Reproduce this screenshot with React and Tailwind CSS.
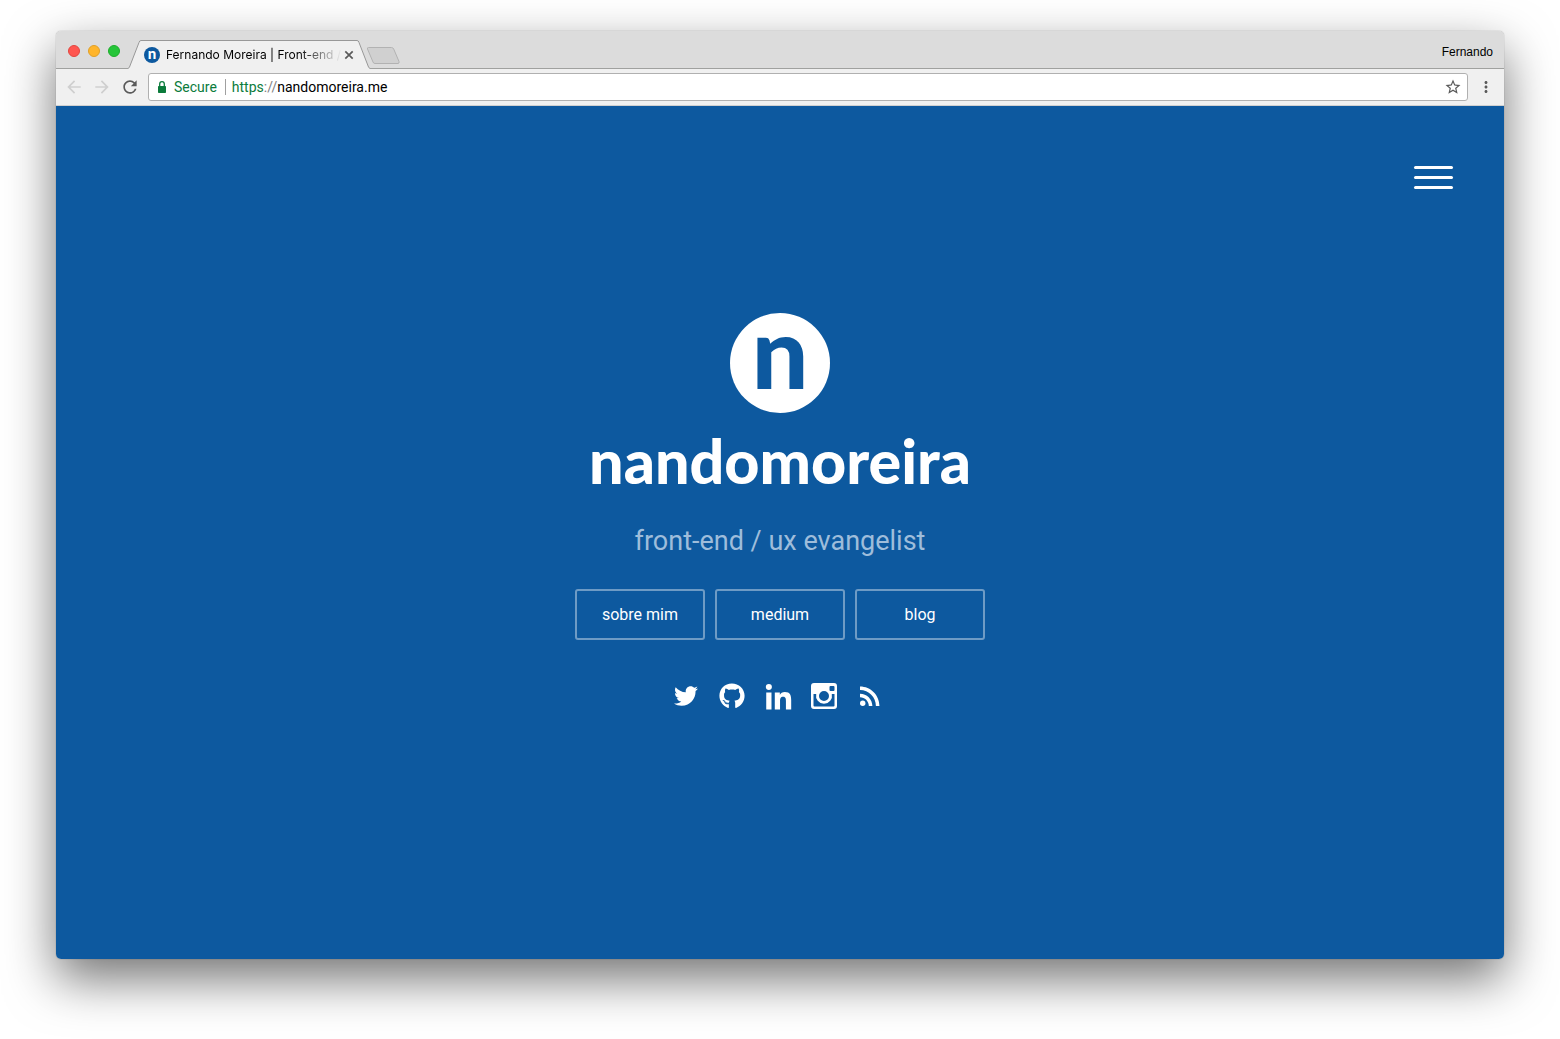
import React from "react";
import { FaTwitter, FaGithub, FaLinkedinIn } from "react-icons/fa";
import { MdRssFeed, MdRefresh, MdArrowBack, MdArrowForward, MdStarBorder, MdMoreVert } from "react-icons/md";

function InstagramIcon() {
  return (
    <svg viewBox="0 0 26 26" className="size-[26px]" aria-hidden="true">
      <path
        fill="currentColor"
        fillRule="evenodd"
        d="M3 0h20a3 3 0 0 1 3 3v20a3 3 0 0 1-3 3H3a3 3 0 0 1-3-3V3a3 3 0 0 1 3-3zM19.500 3a1 1 0 0 0-1 1v3a1 1 0 0 0 1 1h3a1 1 0 0 0 1-1V4a1 1 0 0 0-1-1zM2.500 11v11.500a1 1 0 0 0 1 1h19a1 1 0 0 0 1-1V11h-2.700a8 8 0 1 1-15.600 0zM13 8a5 5 0 1 0 0 10a5 5 0 0 0 0-10z"
      />
    </svg>
  );
}

function LockIcon() {
  return (
    <svg viewBox="0 0 14 14" className="size-[14px]" aria-hidden="true">
      <rect x="3" y="6" width="8" height="7" rx="0.800" fill="currentColor" />
      <path d="M4.700 6.500V4a2.300 2.300 0 0 1 4.600 0v2.500" fill="none" stroke="currentColor" strokeWidth="1.300" />
    </svg>
  );
}

function TabStrip() {
  return (
    <div className="flex h-[38px] items-end border-b border-[#a0a19f] bg-[#dcdcdc]">
      <div className="flex gap-2 self-center pl-3 pt-[2px]">
        <button aria-label="Close window" className="size-3 rounded-full border border-[#e2463f] bg-[#ff5650]" />
        <button aria-label="Minimize window" className="size-3 rounded-full border border-[#e0a028] bg-[#ffb52b]" />
        <button aria-label="Zoom window" className="size-3 rounded-full border border-[#1dad2b] bg-[#25c539]" />
      </div>
      <div className="-mb-px ml-2 flex h-[29px]">
        <svg viewBox="0 0 13 29" className="h-[29px] w-[13px]" aria-hidden="true">
          <path d="M0 29L1.500 27.500L11 2.500Q11.500.5 13 .5V29z" fill="#f0f0f0" />
          <path d="M0 28.500L1.500 27L11 2.500Q11.500.5 13 .5" fill="none" stroke="#989898" />
        </svg>
        <div className="flex w-[216px] items-center border-t border-[#989898] bg-[#f0f0f0] pl-[3px]">
          <span className="flex size-4 items-center justify-center rounded-full bg-[#0d599f] font-[Lato,sans-serif] text-[15px] leading-none font-black text-white" aria-hidden="true">
            <span className="-mt-1">n</span>
          </span>
          <span className="ml-[6px] w-[176px] overflow-hidden bg-linear-to-r from-black from-75% to-transparent to-100% bg-clip-text font-[Inter,sans-serif] text-xs whitespace-nowrap text-transparent">
            Fernando Moreira | Front-end /
          </span>
          <button aria-label="Close tab" className="ml-[2px]">
            <svg viewBox="0 0 10 10" className="size-[10px]" aria-hidden="true">
              <path d="M1.300 1.300l7.400 7.400M8.700 1.300l-7.400 7.400" stroke="#5a5a5a" strokeWidth="1.700" />
            </svg>
          </button>
        </div>
        <svg viewBox="0 0 13 29" className="h-[29px] w-[13px]" aria-hidden="true">
          <path d="M13 29L11.500 27.500L2 2.500Q1.500.5 0 .5V29z" fill="#f0f0f0" />
          <path d="M13 28.500L11.500 27L2 2.500Q1.500.5 0 .5" fill="none" stroke="#989898" />
        </svg>
      </div>
      <button aria-label="New tab" className="mb-1 -ml-[4px]">
        <svg viewBox="0 0 34 17" className="h-[17px] w-[34px]" aria-hidden="true">
          <path d="M2.500.5H25.500Q27 .5 27.700 2L33 14.500Q33.500 16.500 32 16.500H9Q7.500 16.500 7 15L1.500 2Q1 .5 2.500 .5z" fill="#d0d0d0" stroke="#b2b2b2" />
        </svg>
      </button>
      <button className="mr-[11px] ml-auto self-center pt-1 font-['Liberation_Sans',sans-serif] text-xs text-black">Fernando</button>
    </div>
  );
}

function Toolbar() {
  return (
    <div className="flex h-[37px] items-center border-b border-[#d0d0d0] bg-[#f0f0f0]">
      <div className="flex w-[92px] items-center gap-2 pl-2">
        <button aria-label="Back" className="text-[#cfcfcf]"><MdArrowBack className="size-5" /></button>
        <button aria-label="Forward" className="text-[#cfcfcf]"><MdArrowForward className="size-5" /></button>
        <button aria-label="Reload" className="text-[#5a5a5a]"><MdRefresh className="size-5" /></button>
      </div>
      <div className="flex h-7 flex-1 items-center rounded-[3px] border border-[#b0b0b0] bg-white pr-[5px] pl-[6px] font-[Roboto,sans-serif] text-sm leading-5">
        <span className="text-[#0b7b3b]"><LockIcon /></span>
        <span className="ml-[5px] text-[#0b7b3b]">Secure</span>
        <span className="mr-[6px] ml-2 h-4 w-px bg-[#a0a0a0]" />
        <a href="https://nandomoreira.me" className="text-black">
          <span className="text-[#0b7b3b]">https</span>
          <span className="text-[#808080]">://</span>nandomoreira.me
        </a>
        <button aria-label="Bookmark this page" className="ml-auto text-[#5a5a5a]"><MdStarBorder className="size-[18px]" /></button>
      </div>
      <button aria-label="Browser menu" className="mx-[9px] text-[#5a5a5a]"><MdMoreVert className="size-[18px]" /></button>
    </div>
  );
}

const pages = ["sobre mim", "medium", "blog"];
const social = [
  { name: "Twitter", icon: <FaTwitter className="size-6" /> },
  { name: "GitHub", icon: <FaGithub className="size-[26px]" /> },
  { name: "LinkedIn", icon: <FaLinkedinIn className="mt-1 size-[29px]" /> },
  { name: "Instagram", icon: <InstagramIcon /> },
  { name: "RSS", icon: <MdRssFeed className="size-[30px]" /> },
];

export default function App() {
  return (
    <div className="flex min-h-screen flex-col bg-white px-14 pt-[31px] pb-20">
      <div className="flex flex-1 flex-col overflow-hidden rounded-[5px] shadow-[0_0_1px_rgba(0,0,0,0.5),0_20px_50px_rgba(0,0,0,0.55)]">
        <TabStrip />
        <Toolbar />
        <div className="flex flex-1 flex-col bg-[#0d599f] text-white">
          <header className="flex justify-end pt-[60px] pr-[51px]">
            <button aria-label="Menu" className="flex w-[39px] flex-col gap-[7px]">
              <span className="h-[3px] w-full rounded-full bg-white" />
              <span className="h-[3px] w-full rounded-full bg-white" />
              <span className="h-[3px] w-full rounded-full bg-white" />
            </button>
          </header>
          <main className="flex flex-col items-center pt-[124px] font-[Roboto,sans-serif]">
            <div className="flex size-[100px] items-center justify-center rounded-full bg-white font-[Lato,sans-serif] text-[100px] leading-none font-black text-[#0d599f]" aria-hidden="true">
              <span className="-mt-[26px]">n</span>
            </div>
            <h1 className="mt-2 font-[Lato,sans-serif] text-[61px] leading-[80px] font-black">nandomoreira</h1>
            <p className="mt-5 text-[27px] leading-10 text-[#9ebddb]">front-end / ux evangelist</p>
            <nav className="mt-7 flex gap-[10px]">
              {pages.map((page) => (
                <a key={page} href="#" className="flex h-[51px] w-[130px] items-center justify-center rounded-[3px] border-2 border-[#6e9bc5] text-base">
                  {page}
                </a>
              ))}
            </nav>
            <div className="mt-[41px] flex gap-4 pr-1">
              {social.map(({ name, icon }) => (
                <a key={name} href="#" aria-label={name} className="flex size-[30px] items-center justify-center">
                  {icon}
                </a>
              ))}
            </div>
          </main>
        </div>
      </div>
    </div>
  );
}
